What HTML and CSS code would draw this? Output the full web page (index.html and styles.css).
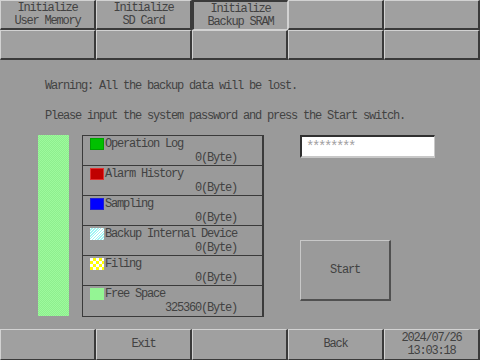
FILE: index.html
```html
<!DOCTYPE html>
<html lang="en">
<head>
  <meta charset="UTF-8" />
  <title>Initialize Backup SRAM</title>
  <link rel="stylesheet" href="styles.css">
</head>
<body>
  <div class="screen">

    <!-- Top function keys -->
    <div class="keys keys-top">
      <div class="key">Initialize<br>User Memory</div>
      <div class="key">Initialize<br>SD Card</div>
      <div class="key pressed">Initialize<br>Backup SRAM</div>
      <div class="key"></div>
      <div class="key"></div>
      <div class="key"></div>
      <div class="key"></div>
      <div class="key"></div>
      <div class="key"></div>
      <div class="key"></div>
    </div>

    <div class="main">
      <p class="msg msg-first">Warning: All the backup data will be lost.</p>
      <p class="msg">Please input the system password and press the Start switch.</p>

      <div class="panel">
        <div class="usage-bar"></div>

        <div class="usage-table">
          <div class="usage-row">
            <div class="usage-label"><span class="swatch sw-log"></span>Operation Log</div>
            <div class="usage-value">0(Byte)</div>
          </div>
          <div class="usage-row">
            <div class="usage-label"><span class="swatch sw-alarm"></span>Alarm History</div>
            <div class="usage-value">0(Byte)</div>
          </div>
          <div class="usage-row">
            <div class="usage-label"><span class="swatch sw-sampling"></span>Sampling</div>
            <div class="usage-value">0(Byte)</div>
          </div>
          <div class="usage-row">
            <div class="usage-label"><span class="swatch sw-device"></span>Backup Internal Device</div>
            <div class="usage-value">0(Byte)</div>
          </div>
          <div class="usage-row">
            <div class="usage-label"><span class="swatch sw-filing"></span>Filing</div>
            <div class="usage-value">0(Byte)</div>
          </div>
          <div class="usage-row">
            <div class="usage-label"><span class="swatch sw-free"></span>Free Space</div>
            <div class="usage-value">325360(Byte)</div>
          </div>
        </div>

        <div class="side">
          <div class="password">********</div>
          <div class="start-button">Start</div>
        </div>
      </div>
    </div>

    <!-- Bottom function keys -->
    <div class="keys keys-bottom">
      <div class="key"></div>
      <div class="key">Exit</div>
      <div class="key"></div>
      <div class="key">Back</div>
      <div class="key clock">2024/07/26<br>13:03:18</div>
    </div>

  </div>
</body>
</html>
```

FILE: styles.css
```css
/* Base panel look: flat gray HMI screen */
body {
  margin: 0;
  background: #9a9a9a;
  font-family: "Liberation Mono", "DejaVu Sans Mono", monospace;
  font-size: 12px;
  letter-spacing: -1.2px;
  color: #424242;
}
.screen {
  width: 480px;
  height: 360px;
  display: flex;
  flex-direction: column;
  overflow: hidden;
}
/* Function key grids */
.keys {
  display: grid;
  grid-template-columns: repeat(5, 96px);
}
.keys-top {
  grid-template-rows: repeat(2, 30px);
}
.keys-bottom {
  grid-template-rows: 31px;
}
.key {
  box-sizing: border-box;
  display: flex;
  align-items: center;
  justify-content: center;
  text-align: center;
  line-height: 13px;
  white-space: nowrap;
  background: #a0a0a0;
  border-style: solid;
  border-width: 1px 2px 2px 1px;
  border-color: #d2d2d2 #3a3a3a #3a3a3a #d2d2d2;
}
.key.pressed {
  border-width: 2px 1px 1px 2px;
  border-color: #3a3a3a #d2d2d2 #d2d2d2 #3a3a3a;
}
.keys-bottom .key {
  border-bottom-width: 1px;
}
/* Main content */
.main {
  flex: 1;
  display: flex;
  flex-direction: column;
}
.msg {
  margin: 0;
  padding-left: 45px;
  height: 30px;
  line-height: 14px;
  white-space: nowrap;
}
.msg-first {
  margin-top: 19px;
}
.msg + .msg {
  height: 26px;
}
.panel {
  display: flex;
  align-items: flex-start;
  padding-left: 38px;
}
/* Stacked usage bar (all free space) */
.usage-bar {
  width: 31px;
  height: 181px;
  background-color: #94f594;
  background-image: repeating-conic-gradient(#9dfa9d 0 25%, #8eee8e 0 50%);
  background-size: 2px 2px;
  margin-right: 13px;
}
.usage-table {
  width: 182px;
  border: 1px solid #3a3a3a;
  border-right-width: 2px;
  box-sizing: border-box;
}
.usage-row {
  height: 30px;
  box-sizing: border-box;
  border-bottom: 1px solid #3a3a3a;
  padding: 1px 25px 0 7px;
  line-height: 14px;
  white-space: nowrap;
}
.usage-row:last-child {
  border-bottom: 0;
}
.usage-label {
  display: flex;
  align-items: center;
}
.usage-value {
  text-align: right;
}
.swatch {
  flex: none;
  width: 14px;
  height: 12px;
  margin-right: 1px;
  box-sizing: border-box;
}
.sw-log { background: #00c000; border: 1px solid #00a000; }
.sw-alarm { background: #c00000; border: 1px solid #e03030; }
.sw-sampling { background: #0000ff; border: 1px solid #2020d0; }
.sw-device {
  background: repeating-linear-gradient(-45deg, #9ff5f5 0 1px, #ffffff 1px 2px);
}
.sw-filing {
  background-color: #ffff00;
  background-image: repeating-conic-gradient(#ffff00 0 25%, #ffffff 0 50%);
  background-size: 6px 6px;
}
.sw-free { background: #94f594; }
/* Password field and Start switch */
.side {
  margin-left: 36px;
  display: flex;
  flex-direction: column;
  align-items: flex-start;
}
.password {
  width: 135px;
  height: 23px;
  box-sizing: border-box;
  background: #fff;
  border-style: solid;
  border-width: 2px 1px 2px 2px;
  border-color: #303030 #c8c8c8 #c8c8c8 #303030;
  padding-left: 4px;
  font-size: 14px;
  letter-spacing: -2.4px;
  line-height: 21px;
  color: #a0a0a0;
}
.start-button {
  margin-top: 82px;
  width: 91px;
  height: 61px;
  box-sizing: border-box;
  display: flex;
  align-items: center;
  justify-content: center;
  background: #9a9a9a;
  border-style: solid;
  border-width: 1px 2px 2px 1px;
  border-color: #c8c8c8 #505050 #505050 #c8c8c8;
}
```
